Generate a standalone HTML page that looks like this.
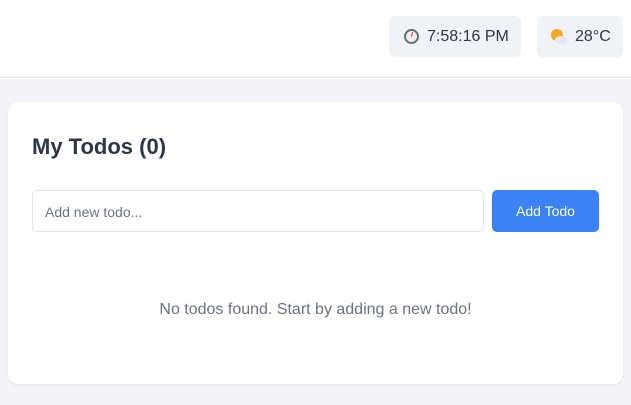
<!DOCTYPE html>
<html><head><style>
*{box-sizing:border-box;margin:0;padding:0}
body{width:631px;height:405px;background:#f3f4f8;font-family:"Liberation Sans",sans-serif;overflow:hidden;position:relative}
.hdr{position:absolute;left:0;top:0;width:631px;height:78px;background:#fff;border-bottom:1px solid #e2e6ec}
.b{position:absolute;top:16px;height:41px;background:#eff2f7;border-radius:6px;font-size:16px;color:#2d3748;display:flex;align-items:center}
.card{position:absolute;left:8px;top:102px;width:615px;height:282px;background:#fff;border-radius:10px;box-shadow:0 1px 3px rgba(0,0,0,.08)}
h1{position:absolute;left:24px;top:32px;font-size:22px;color:#2d3748;font-weight:bold}
.in{position:absolute;left:24px;top:88px;width:452px;height:42px;border:1px solid #dfe3ea;border-radius:5px;font-size:14px;color:#6b7280;padding:13px 12px}
.btn{position:absolute;left:484px;top:88px;width:107px;height:42px;background:#3b82f6;border-radius:5px;color:#fff;font-size:14px;text-align:center;line-height:42px}
.e{position:absolute;left:0;width:615px;top:199px;text-align:center;color:#6b7280;font-size:16px}
</style></head><body>
<div class="hdr">
<div class="b" style="left:389px;width:132px;padding-left:14px"><svg width="17" height="17" viewBox="0 0 17 17" style="margin-right:7px"><circle cx="8.5" cy="8.5" r="7.5" fill="#6b6b6b"/><circle cx="8.5" cy="8.5" r="5.5" fill="#eee"/><line x1="8.5" y1="8.5" x2="9.5" y2="4" stroke="#d33" stroke-width="1"/></svg>7:58:16 PM</div>
<div class="b" style="left:537px;width:86px;padding-left:13px"><svg width="18" height="17" viewBox="0 0 18 17" style="margin-right:7px"><circle cx="7" cy="7" r="6" fill="#f5a623"/><ellipse cx="11" cy="12" rx="6" ry="4" fill="#e6e6f0"/></svg>28°C</div>
</div>
<div class="card">
<h1>My Todos (0)</h1>
<div class="in">Add new todo...</div>
<div class="btn">Add Todo</div>
<div class="e">No todos found. Start by adding a new todo!</div>
</div>
</body></html>
